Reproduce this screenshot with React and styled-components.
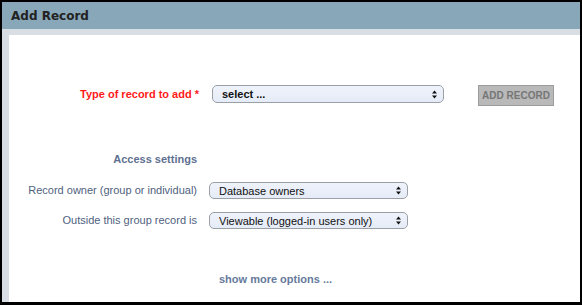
import React from "react";
import styled, { createGlobalStyle } from "styled-components";

const Global = createGlobalStyle`
  html, body { margin: 0; padding: 0; background: #fff; }
  #root { width: 582px; height: 305px; }
`;

const Frame = styled.div`
  box-sizing: border-box;
  width: 582px;
  height: 305px;
  border: 2px solid #000;
  border-bottom-width: 3px;
  display: flex;
  flex-direction: column;
  background: #d9dee5;
`;

const Header = styled.div`
  height: 27px;
  flex: none;
  background: #88a7b8;
  display: flex;
  align-items: center;
  padding-left: 9px;
  font-family: "DejaVu Sans", Verdana, sans-serif;
  font-weight: bold;
  font-size: 12px;
  color: #222;
`;

const Body = styled.div`
  flex: 1;
  padding: 6px 0 0 7px;
  display: flex;
  min-height: 0;
`;

const Panel = styled.div`
  flex: 1;
  background: #fff;
  display: flex;
  flex-direction: column;
  padding-top: 50px;
  font-family: "Liberation Sans", Arial, sans-serif;
  font-size: 11px;
`;

const Row = styled.div`
  display: grid;
  grid-template-columns: ${(p) => p.$label}px ${(p) => p.$select}px auto;
  column-gap: ${(p) => p.$gap}px;
  align-items: start;
  margin-top: ${(p) => p.$top || 0}px;
`;

const Label = styled.div`
  text-align: right;
  line-height: ${(p) => p.$h}px;
  color: ${(p) => (p.$required ? "#ff1a1a" : "#4f5f7e")};
  font-weight: ${(p) => (p.$required ? "bold" : "normal")};
  white-space: nowrap;
`;

const Heading = styled.div`
  width: 188px;
  text-align: right;
  margin-top: 47px;
  line-height: 13px;
  font-weight: bold;
  color: #5e7090;
`;

const Select = styled.div`
  box-sizing: border-box;
  height: ${(p) => p.$h}px;
  border: 1px solid #9b9fa6;
  border-radius: 5px;
  background: linear-gradient(#eef2fb, #e6ecf7);
  display: flex;
  align-items: center;
  justify-content: space-between;
  padding: 0 6px 0 9px;
  color: #111;
  font-weight: ${(p) => (p.$bold ? "bold" : "normal")};
  white-space: nowrap;
`;

const Button = styled.div`
  box-sizing: border-box;
  margin-left: 21px;
  width: 76px;
  height: 21px;
  background: #b9b9b9;
  border: 1px solid #9c9c9c;
  color: #767676;
  font-size: 10px;
  font-weight: bold;
  display: flex;
  align-items: center;
  justify-content: center;
`;

const MoreLink = styled.div`
  margin-top: 44px;
  padding-left: 210px;
  line-height: 13px;
  font-weight: bold;
  color: #667a9c;
`;

const Arrows = () => (
  <svg width="5" height="9" viewBox="0 0 5 9" aria-hidden="true">
    <path d="M0 3.6 L2.5 0.4 L5 3.6 Z" fill="#111" />
    <path d="M0 5.4 L2.5 8.6 L5 5.4 Z" fill="#111" />
  </svg>
);

const FakeSelect = ({ children, h, bold }) => (
  <Select $h={h} $bold={bold}>
    <span>{children}</span>
    <Arrows />
  </Select>
);

export default function App() {
  return (
    <>
      <Global />
      <Frame>
        <Header>Add Record</Header>
        <Body>
          <Panel>
            <Row $label={190} $select={232} $gap={13}>
              <Label $required $h={18}>Type of record to add *</Label>
              <FakeSelect h={18} bold>select ...</FakeSelect>
              <Button>ADD RECORD</Button>
            </Row>
            <Heading>Access settings</Heading>
            <Row $label={188} $select={199} $gap={12} $top={16}>
              <Label $h={17}>Record owner (group or individual)</Label>
              <FakeSelect h={17}>Database owners</FakeSelect>
            </Row>
            <Row $label={188} $select={199} $gap={12} $top={13}>
              <Label $h={17}>Outside this group record is</Label>
              <FakeSelect h={17}>Viewable (logged-in users only)</FakeSelect>
            </Row>
            <MoreLink>show more options ...</MoreLink>
          </Panel>
        </Body>
      </Frame>
    </>
  );
}
